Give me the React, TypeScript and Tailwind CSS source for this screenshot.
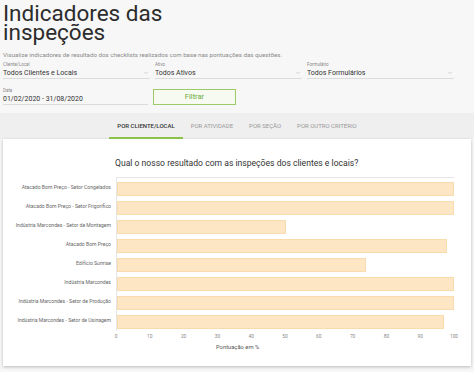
import { ChevronDown } from "lucide-react";

const rows = [
  { label: "Atacado Bom Preço - Setor Congelados", value: 100 },
  { label: "Atacado Bom Preço - Setor Frigorífico", value: 100 },
  { label: "Indústria Marcondes - Setor de Montagem", value: 50 },
  { label: "Atacado Bom Preço", value: 98 },
  { label: "Edifício Sunrise", value: 74 },
  { label: "Indústria Marcondes", value: 100 },
  { label: "Indústria Marcondes - Setor de Produção", value: 100 },
  { label: "Indústria Marcondes - Setor de Usinagem", value: 97 },
];

const ticks = [0, 10, 20, 30, 40, 50, 60, 70, 80, 90, 100];

const tabs = ["POR CLIENTE/LOCAL", "POR ATIVIDADE", "POR SEÇÃO", "POR OUTRO CRITÉRIO"];

function Select({ label, value }: { label: string; value: string }) {
  return (
    <div className="flex flex-col">
      <span className="text-[4.5px] leading-[6px] text-[#888]">{label}</span>
      <div className="flex h-[11px] items-center justify-between border-b border-[#dcdcdc]">
        <span className="text-[7px] text-[#333]">{value}</span>
        <ChevronDown className="mr-[1px] h-[6px] w-[6px] text-[#aaa]" />
      </div>
    </div>
  );
}

export default function App() {
  return (
    <div className="h-[372px] w-[474px] overflow-hidden bg-[#f7f7f7] font-['Roboto',sans-serif]">
      <div className="px-[3px] pt-[1px]">
        <h1 className="pt-[3px] text-[22.5px] leading-[19px] font-normal text-[#2c2c2c]">
          Indicadores das
          <br />
          inspeções
        </h1>
        <p className="mt-[9px] text-[6.2px] leading-[8px] text-[#8a8a8a]">
          Visualize indicadores de resultado dos checklists realizados com base nas pontuações das questões.
        </p>
        <div className="mt-[3px] grid grid-cols-[147px_147px_147px] gap-x-[5px]">
          <Select label="Cliente/Local" value="Todos Clientes e Locais" />
          <Select label="Ativo" value="Todos Ativos" />
          <Select label="Formulário" value="Todos Formulários" />
        </div>
        <div className="mt-[9px] grid grid-cols-[145px_83px] gap-x-[5px]">
          <div className="flex flex-col">
            <span className="text-[4.5px] leading-[6px] text-[#888]">Data</span>
            <div className="flex h-[11px] items-center border-b border-[#dcdcdc]">
              <span className="text-[7px] text-[#333]">01/02/2020 - 31/08/2020</span>
            </div>
          </div>
          <button className="mt-[1px] flex h-[16px] items-center justify-center border border-[#9ccc6a] bg-[#f6faf1] text-[7.5px] text-[#6aac3c]">
            Filtrar
          </button>
        </div>
      </div>

      <div className="mt-[8px] flex h-[26px] justify-center bg-[#efefef]">
        {tabs.map((t, i) => (
          <div
            key={t}
            className={
              i === 0
                ? "flex items-center border-b-2 border-[#8bc34a] px-[8px] text-[6px] font-medium text-[#333]"
                : "flex items-center border-b-2 border-transparent px-[8px] text-[6px] text-[#999]"
            }
          >
            {t}
          </div>
        ))}
      </div>

      <div className="mx-[3px] h-[227px] bg-white shadow-[0_1px_3px_rgba(0,0,0,0.25)]">
        <p className="pt-[19px] pl-[112px] text-[8.6px] leading-[11px] text-[#333]">
          Qual o nosso resultado com as inspeções dos clientes e locais?
        </p>
        <div className="mt-[8px] flex">
          <div className="flex w-[113px] flex-col pt-[1px]">
            {rows.map((r) => (
              <div key={r.label} className="flex h-[19px] items-center justify-end pr-[5px] text-[5.1px] text-[#666]">
                {r.label}
              </div>
            ))}
          </div>
          <div className="flex w-[338px] flex-col border-l border-t border-[#e6e6e6] pt-[1px]">
            {rows.map((r) => (
              <div key={r.label} className="flex h-[19px] items-center">
                <div
                  className="h-[14px] border border-[#f8dcae] bg-[#fde6c3]"
                  style={{ width: `${r.value}%` }}
                />
              </div>
            ))}
          </div>
        </div>
        <div className="relative ml-[113px] mt-[1px] h-[9px] w-[338px]">
          {ticks.map((t) => (
            <span
              key={t}
              className="absolute top-0 -translate-x-1/2 text-[4.8px] leading-[9px] text-[#888]"
              style={{ left: `${t}%` }}
            >
              {t}
            </span>
          ))}
        </div>
        <p className="mt-[2px] pl-[213px] text-[5.8px] leading-[8px] text-[#555]">Pontuação em %</p>
      </div>
    </div>
  );
}
